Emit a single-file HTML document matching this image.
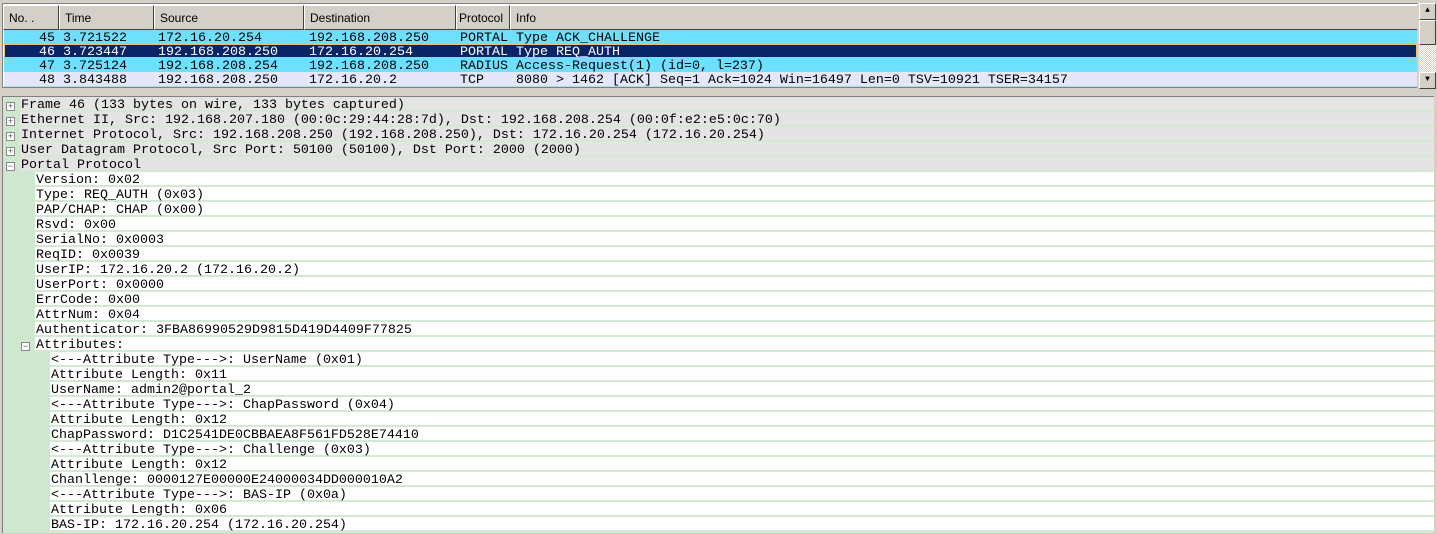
<!DOCTYPE html>
<html><head><meta charset="utf-8"><style>
*{margin:0;padding:0;box-sizing:border-box}
body{width:1437px;height:533px;background:#d4d0c8;position:relative;overflow:hidden;font-family:"Liberation Mono",monospace;font-size:13.33px}
#list{position:absolute;left:2px;top:3px;width:1415px;height:85px;background:#fff;border:1px solid #808080;border-right:none;overflow:hidden}
.hdr{position:absolute;top:1px;height:25px;background:#d4d0c8;border-top:1px solid #fff;border-left:1px solid #fff;border-right:1px solid #404040;border-bottom:1px solid #404040;font-family:"Liberation Sans",sans-serif;font-size:12px;line-height:24px;padding-left:5px;color:#000}
.pr{position:absolute;left:1px;width:1413px;height:14px;line-height:17px;white-space:pre;color:#000;overflow:hidden}
.pr span{position:absolute;top:0}
#sb{position:absolute;left:1419px;top:3px;width:17px;height:86px;background:repeating-conic-gradient(#d4d0c8 0 25%,#fff 0 50%) 0 0/2px 2px}
.btn{position:absolute;left:0;width:17px;height:17px;background:#d4d0c8;border-top:1px solid #fff;border-left:1px solid #fff;border-right:1px solid #404040;border-bottom:1px solid #404040}
#det{position:absolute;left:2px;top:96px;width:1432px;height:437px;background:#cfe7cf;border-top:1px solid #808080;border-left:1px solid #808080}
.r{position:absolute;height:15px;line-height:17px;white-space:pre;border-bottom:2px solid #d2e9d2;color:#000;padding-left:1px}
.g{background:#e4e4e4}
.w{background:#fff}
.ex{position:absolute;width:9px;height:9px;border:1px solid #888;background:#fff;font-size:9px;line-height:7px;text-align:center;color:#555;font-family:"Liberation Sans",sans-serif}
</style></head><body>
<div id="list">
<div class="hdr" style="left:0;width:56px">No. .</div>
<div class="hdr" style="left:56px;width:95px">Time</div>
<div class="hdr" style="left:151px;width:150px">Source</div>
<div class="hdr" style="left:301px;width:152px">Destination</div>
<div class="hdr" style="left:453px;width:54px;padding-left:2px">Protocol</div>
<div class="hdr" style="left:507px;width:908px">Info</div>
<div class="pr" style="top:26px;background:#6ee0fe"><span style="left:35px">45 3.721522</span><span style="left:154px">172.16.20.254</span><span style="left:305px">192.168.208.250</span><span style="left:456px">PORTAL Type ACK_CHALLENGE</span></div>
<div class="pr" style="top:40px;background:#0a2468;color:#fff;border:1px solid #e8c070"><span style="left:34px;top:-1px">46 3.723447</span><span style="left:153px;top:-1px">192.168.208.250</span><span style="left:304px;top:-1px">172.16.20.254</span><span style="left:455px;top:-1px">PORTAL Type REQ_AUTH</span></div>
<div class="pr" style="top:54px;background:#6ee0fe"><span style="left:35px">47 3.725124</span><span style="left:154px">192.168.208.254</span><span style="left:305px">192.168.208.250</span><span style="left:456px">RADIUS Access-Request(1) (id=0, l=237)</span></div>
<div class="pr" style="top:68px;height:15px;background:#e6e6fa;border-bottom:1px solid #a0e0f0"><span style="left:35px">48 3.843488</span><span style="left:154px">192.168.208.250</span><span style="left:305px">172.16.20.2</span><span style="left:456px">TCP    8080 &gt; 1462 [ACK] Seq=1 Ack=1024 Win=16497 Len=0 TSV=10921 TSER=34157</span></div>
</div>
<div id="sb"><div class="btn" style="top:0;font-size:8px;text-align:center;line-height:14px">▲</div><div class="btn" style="top:17px;height:25px"></div><div class="btn" style="top:69px;font-size:8px;text-align:center;line-height:14px">▼</div></div>
<div id="det">
<div class="ex" style="left:3px;top:5px">+</div><div class="r g" style="left:17px;right:0;top:0">Frame 46 (133 bytes on wire, 133 bytes captured)</div>
<div class="ex" style="left:3px;top:20px">+</div><div class="r g" style="left:17px;right:0;top:15px">Ethernet II, Src: 192.168.207.180 (00:0c:29:44:28:7d), Dst: 192.168.208.254 (00:0f:e2:e5:0c:70)</div>
<div class="ex" style="left:3px;top:35px">+</div><div class="r g" style="left:17px;right:0;top:30px">Internet Protocol, Src: 192.168.208.250 (192.168.208.250), Dst: 172.16.20.254 (172.16.20.254)</div>
<div class="ex" style="left:3px;top:50px">+</div><div class="r g" style="left:17px;right:0;top:45px">User Datagram Protocol, Src Port: 50100 (50100), Dst Port: 2000 (2000)</div>
<div class="ex" style="left:3px;top:65px">−</div><div class="r g" style="left:17px;right:0;top:60px">Portal Protocol</div>
<div class="r w" style="left:32px;right:0;top:75px">Version: 0x02</div>
<div class="r w" style="left:32px;right:0;top:90px">Type: REQ_AUTH (0x03)</div>
<div class="r w" style="left:32px;right:0;top:105px">PAP/CHAP: CHAP (0x00)</div>
<div class="r w" style="left:32px;right:0;top:120px">Rsvd: 0x00</div>
<div class="r w" style="left:32px;right:0;top:135px">SerialNo: 0x0003</div>
<div class="r w" style="left:32px;right:0;top:150px">ReqID: 0x0039</div>
<div class="r w" style="left:32px;right:0;top:165px">UserIP: 172.16.20.2 (172.16.20.2)</div>
<div class="r w" style="left:32px;right:0;top:180px">UserPort: 0x0000</div>
<div class="r w" style="left:32px;right:0;top:195px">ErrCode: 0x00</div>
<div class="r w" style="left:32px;right:0;top:210px">AttrNum: 0x04</div>
<div class="r w" style="left:32px;right:0;top:225px">Authenticator: 3FBA86990529D9815D419D4409F77825</div>
<div class="ex" style="left:18px;top:245px">−</div><div class="r w" style="left:32px;right:0;top:240px">Attributes:</div>
<div class="r w" style="left:47px;right:0;top:255px">&lt;---Attribute Type---&gt;: UserName (0x01)</div>
<div class="r w" style="left:47px;right:0;top:270px">Attribute Length: 0x11</div>
<div class="r w" style="left:47px;right:0;top:285px">UserName: admin2@portal_2</div>
<div class="r w" style="left:47px;right:0;top:300px">&lt;---Attribute Type---&gt;: ChapPassword (0x04)</div>
<div class="r w" style="left:47px;right:0;top:315px">Attribute Length: 0x12</div>
<div class="r w" style="left:47px;right:0;top:330px">ChapPassword: D1C2541DE0CBBAEA8F561FD528E74410</div>
<div class="r w" style="left:47px;right:0;top:345px">&lt;---Attribute Type---&gt;: Challenge (0x03)</div>
<div class="r w" style="left:47px;right:0;top:360px">Attribute Length: 0x12</div>
<div class="r w" style="left:47px;right:0;top:375px">Chanllenge: 0000127E00000E24000034DD000010A2</div>
<div class="r w" style="left:47px;right:0;top:390px">&lt;---Attribute Type---&gt;: BAS-IP (0x0a)</div>
<div class="r w" style="left:47px;right:0;top:405px">Attribute Length: 0x06</div>
<div class="r w" style="left:47px;right:0;top:420px">BAS-IP: 172.16.20.254 (172.16.20.254)</div>
</div>
</body></html>
